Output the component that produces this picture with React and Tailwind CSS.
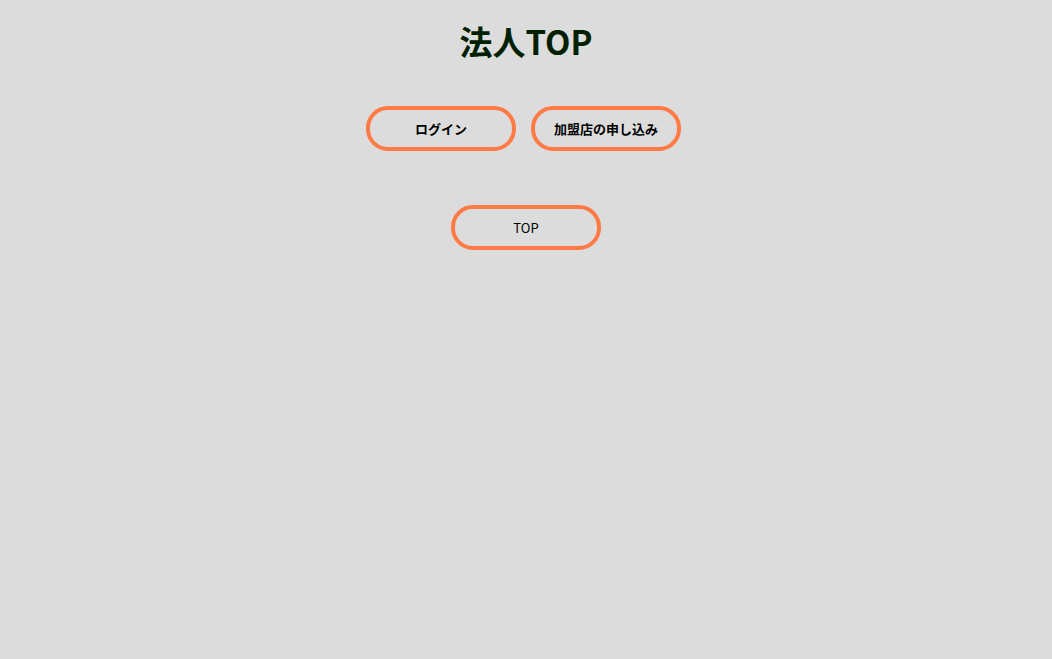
export default function App() {
  return (
    <div className="min-h-[659px] w-full bg-[#dcdcdc] flex flex-col items-center" style={{ fontFamily: '"Noto Sans CJK JP", "Noto Sans", sans-serif' }}>
      <h1 className="mt-[18px] text-[33px] leading-[46px] font-bold text-[#002000]">法人TOP</h1>

      <div className="mt-[42px] mr-[5px] flex gap-[15px]">
        <button className="w-[150px] h-[45px] rounded-[22px] border-[4px] border-[#ff7a45] text-[13px] font-bold text-black bg-transparent">
          ログイン
        </button>
        <button className="w-[150px] h-[45px] rounded-[22px] border-[4px] border-[#ff7a45] text-[13px] font-bold text-black bg-transparent">
          加盟店の申し込み
        </button>
      </div>

      <button className="mt-[54px] w-[150px] h-[45px] rounded-[22px] border-[4px] border-[#ff7a45] text-[13px] text-black bg-transparent">
        TOP
      </button>
    </div>
  )
}
